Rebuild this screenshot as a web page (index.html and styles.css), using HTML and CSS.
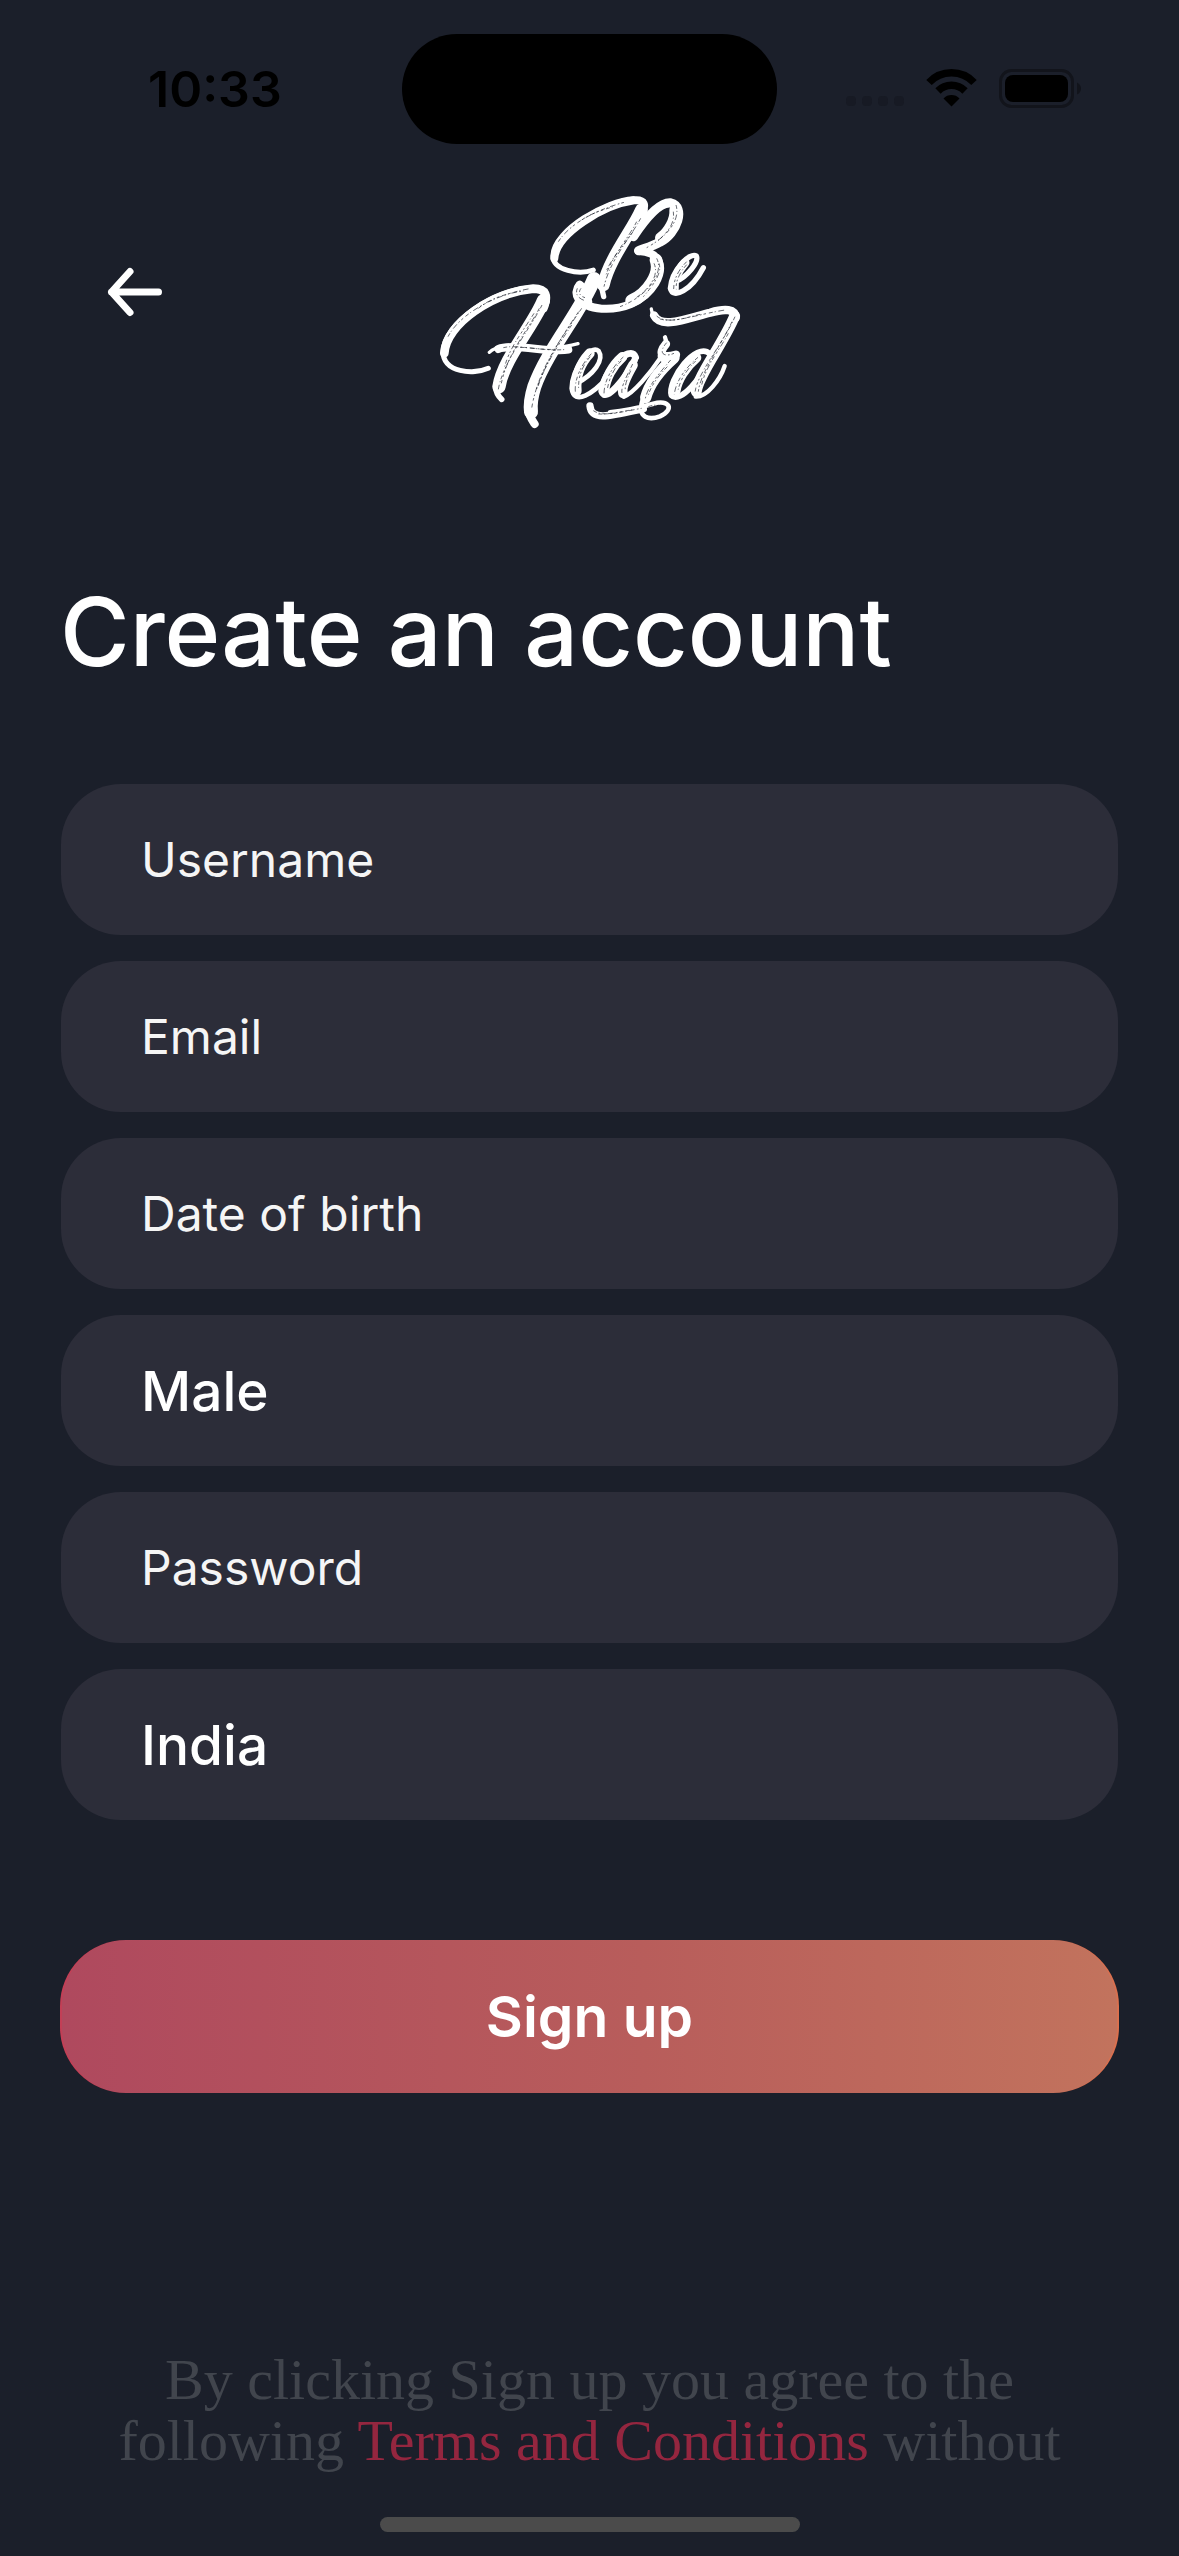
FILE: index.html
```html
<!DOCTYPE html>
<html lang="en">
<head>
<meta charset="utf-8">
<meta name="viewport" content="width=device-width, initial-scale=1">
<title>Be Heard – Create an account</title>
<link rel="stylesheet" href="styles.css">
</head>
<body>
<div class="status-bar">
  <time class="clock">10:33</time>
  <div class="island"></div>
  <svg class="status-icons" viewBox="0 1 236 40" aria-hidden="true">
    <g fill="#171a24"><rect x="1" y="28" width="10" height="10" rx="4"/><rect x="17" y="28" width="10" height="10" rx="4"/><rect x="33" y="28" width="10" height="10" rx="4"/><rect x="49" y="28" width="10" height="10" rx="4"/></g>
    <g fill="none" stroke="#000"><path d="M84 14.500A31 31 0 0 1 129 14.500" stroke-width="7.500"/><path d="M93 23A19 19 0 0 1 120 23" stroke-width="7.500"/></g>
    <path d="M98.500 30.500A11 11 0 0 1 114.500 30.500L106.500 38.500Z"/>
    <rect x="155.500" y="2.500" width="72" height="36" rx="11" fill="none" stroke="#12141b" stroke-width="3"/>
    <rect x="160" y="7" width="63" height="27" rx="8"/>
    <path d="M232 14.500q4 2 4 6t-4 6z" fill="#12141b"/>
  </svg>
</div>
<header class="header">
  <button class="back" type="button" aria-label="Back">
    <svg viewBox="0 0 80 80" aria-hidden="true"><path d="M34 19.500L15.500 40L34 60.500M15.500 40H62.500" fill="none" stroke="#fff" stroke-width="7" stroke-linecap="round" stroke-linejoin="round"/></svg>
  </button>
  <svg class="logo" viewBox="0 0 960 780" role="img" aria-label="Be Heard">
    <g fill="none" stroke="#fff" stroke-linecap="round" stroke-linejoin="round">
      <path stroke-width="15" d="M490 270C450 284 366 274 369 225C372 150 530 60 610 56"/>
      <path stroke-width="24" d="M373 235C378 160 520 74 612 61C645 58 648 75 636 102"/>
      <path stroke-width="38" d="M634 90C608 150 538 235 520 315"/>
      <path stroke-width="16" d="M510 300L521 350"/>
      <path stroke-width="28" d="M610 170C650 110 690 66 722 69C768 80 742 160 690 186C665 200 640 206 626 212"/>
      <path stroke-width="34" d="M735 90C738 120 715 158 692 174"/>
      <path stroke-width="24" d="M626 213C690 215 705 260 676 310C640 370 570 390 515 386C440 380 427 340 449 314"/>
      <path stroke-width="38" d="M678 240C693 280 655 340 605 362"/>
      <path stroke-width="34" d="M451 322C444 340 452 358 470 366"/>
      <path stroke-width="16" d="M738 304C770 292 808 246 799 228C780 215 725 270 721 325C728 360 785 330 820 263"/>
      <path stroke-width="27" d="M765 248C742 275 729 305 733 328"/>
      <path stroke-width="15" d="M175 565C130 585 40 578 39 515C42 430 190 324 310 323"/>
      <path stroke-width="26" d="M43 520C48 430 190 337 310 326C350 326 355 348 340 385"/>
      <path stroke-width="40" d="M340 362C314 430 218 540 207 620"/>
      <path stroke-width="17" d="M197 620C198 642 207 651 215 658"/>
      <path stroke-width="42" d="M492 297C450 400 352 510 313 620C302 655 301 680 303 696"/>
      <path stroke-width="24" d="M294 685C297 710 307 722 314 732"/>
      <path stroke-width="10" d="M178 517C220 476 330 523 444 491"/>
      <path stroke-width="24" d="M205 507C250 489 360 520 415 509"/>
      <path stroke-width="14" d="M440 610C490 585 524 540 506 513C480 490 426 570 425 625C432 680 490 640 535 590"/>
      <path stroke-width="30" d="M479 520C451 550 436 590 440 633"/>
      <path stroke-width="20" d="M617 532C600 487 516 580 515 634C526 673 590 590 614 540"/>
      <path stroke-width="30" d="M577 531C548 556 526 595 523 633"/>
      <path stroke-width="29" d="M609 555C586 595 574 620 579 640"/>
      <path stroke-width="13" d="M582 650C610 640 660 580 690 535"/>
      <path stroke-width="13" d="M705 472C720 500 670 525 698 540"/>
      <path stroke-width="25" d="M708 492C680 525 700 535 738 524"/>
      <path stroke-width="34" d="M732 533C690 570 658 610 647 653"/>
      <path stroke-width="14" d="M638 660C620 717 660 720 690 709C735 688 718 657 670 671C620 685 590 692 540 697"/>
      <path stroke-width="22" d="M480 678C484 724 540 708 640 686"/>
      <path stroke-width="17" d="M839 521C800 482 711 600 724 646C750 674 818 590 842 530"/>
      <path stroke-width="30" d="M799 533C767 560 741 600 737 632"/>
      <path stroke-width="33" d="M914 408C880 490 802 590 799 635"/>
      <path stroke-width="13" d="M797 650C830 652 870 600 884 558"/>
      <path stroke-width="25" d="M672 406C692 448 770 416 840 398C885 385 916 386 917 414"/>
      <path stroke-width="10" d="M664 387L670 415"/>
    </g>
    <g class="grain" fill="none" stroke-linecap="butt">
      <path d="M385 185C420 130 500 88 590 65M455 120C480 102 510 92 550 80"/>
      <path d="M632 115C600 175 540 240 522 320M620 125C595 175 548 225 526 290M609 155C575 205 555 220 530 270"/>
      <path d="M738 75C749 110 728 160 650 203M730 95C735 130 714 157 680 185"/>
      <path d="M680 235C704 280 650 350 570 380M687 250C698 280 666 320 640 350M672 250C688 285 660 325 620 352"/>
      <path d="M442 325C432 348 455 360 466 362M453 325C442 340 453 350 465 353"/>
      <path d="M770 245C740 275 730 305 731 332M770 254C745 282 736 310 739 328"/>
      <path d="M54 470C90 400 200 342 300 326M145 385C180 355 230 340 280 333"/>
      <path d="M336 375C305 440 218 545 205 628M328 385C300 440 232 520 214 610M312 400C275 460 240 500 224 560"/>
      <path d="M455 385C405 460 325 560 305 685M446 395C395 470 350 540 322 625M425 435C385 495 350 545 318 630"/>
      <path d="M220 503C260 492 340 516 410 508M270 502C310 503 340 510 370 508"/>
      <path d="M484 521C452 555 433 600 436 635M480 530C455 562 444 590 446 628"/>
      <path d="M580 531C547 560 523 600 522 640M574 542C552 565 537 595 532 628M608 552C587 595 570 625 577 643M602 572C592 595 584 615 586 630"/>
      <path d="M710 488C682 520 702 533 732 520M722 540C690 577 652 620 646 656M712 560C682 590 662 620 654 648"/>
      <path d="M490 692C520 712 570 696 635 685M505 702C540 704 580 693 610 689M655 680C675 672 695 676 704 682"/>
      <path d="M804 532C767 562 737 605 733 643M797 543C769 570 750 600 744 632"/>
      <path d="M915 410C880 490 797 585 795 640M906 425C875 492 810 580 805 635M895 460C870 508 825 560 814 620"/>
      <path d="M680 408C712 438 790 405 885 390M690 417C730 428 770 412 810 403"/>
    </g>
  </svg>
</header>
<main class="content">
  <h1 class="title">Create an account</h1>
  <form class="form">
    <div class="fields">
      <input class="field" type="text" placeholder="Username" aria-label="Username">
      <input class="field" type="email" placeholder="Email" aria-label="Email">
      <input class="field" type="text" placeholder="Date of birth" aria-label="Date of birth">
      <select class="field field-select" aria-label="Gender"><option>Male</option><option>Female</option></select>
      <input class="field" type="password" placeholder="Password" aria-label="Password">
      <select class="field field-select" aria-label="Country"><option>India</option></select>
    </div>
    <button class="submit" type="submit">Sign up</button>
  </form>
  <p class="legal">By clicking Sign up you agree to the following <a href="#terms">Terms and Conditions</a> without</p>
</main>
<div class="home-indicator"></div>
</body>
</html>
```
FILE: styles.css
```css
* { box-sizing: border-box; }
body {
  margin: 0;
  background: #1b1f2a;
  color: #fff;
  font-family: Inter, "Liberation Sans", sans-serif;
}
.status-bar {
  display: grid;
  grid-template-columns: 1fr 375px 1fr;
  align-items: center;
  padding: 34px 0 36px;
}
.clock {
  padding-left: 148px;
  color: #000;
  font-size: 50px;
  font-weight: 600;
  line-height: 58px;
}
.island {
  height: 110px;
  border-radius: 55px;
  background: #000;
}
.status-icons {
  justify-self: end;
  width: 236px;
  height: 40px;
  margin-right: 98px;
}
.header {
  display: grid;
  grid-template-columns: 1fr 320px 1fr;
  align-items: start;
}
.back {
  width: 80px;
  height: 80px;
  margin: 72px 0 0 96px;
  padding: 0;
  border: 0;
  background: none;
}
.back svg { display: block; }
.logo { display: block; width: 320px; height: 260px; }
.grain path {
  stroke: #1b1f2a;
  stroke-width: 2;
  stroke-dasharray: 12 6 3 8 17 7 5 6 8 9;
}
.content { padding: 0 60px; }
.title {
  margin: 132px 0 92px;
  font-size: 95px;
  font-weight: 500;
  line-height: 120px;
}
.fields {
  display: flex;
  flex-direction: column;
  gap: 26px;
  padding: 0 1px;
}
.field {
  width: 100%;
  height: 151px;
  padding: 0 80px;
  border: 0;
  border-radius: 60px;
  background: #2c2d39;
  color: #fff;
  font-family: inherit;
  font-size: 48px;
}
.field::placeholder { color: #f5f5f5; opacity: 1; }
.field-select {
  appearance: none;
  font-size: 55px;
  font-weight: 500;
}
.submit {
  width: 100%;
  height: 153px;
  margin-top: 120px;
  border: solid transparent;
  border-width: 0 2px;
  border-radius: 66px;
  background:
    linear-gradient(90deg, #af495e, #b85d5b 55%, #c2735d) padding-box,
    linear-gradient(90deg, #c23f56, #d9704f) border-box;
  color: #fff;
  font-family: inherit;
  font-size: 57px;
  font-weight: 600;
}
.legal {
  margin: 256px 0 0;
  padding: 0 40px;
  color: #41454d;
  font-family: "Liberation Serif", serif;
  font-size: 58px;
  line-height: 61px;
  text-align: center;
}
.legal a { color: #94263f; text-decoration: none; }
.home-indicator {
  width: 420px;
  height: 15px;
  margin: 46px auto 24px;
  border-radius: 8px;
  background: #4b4b4b;
}
```
